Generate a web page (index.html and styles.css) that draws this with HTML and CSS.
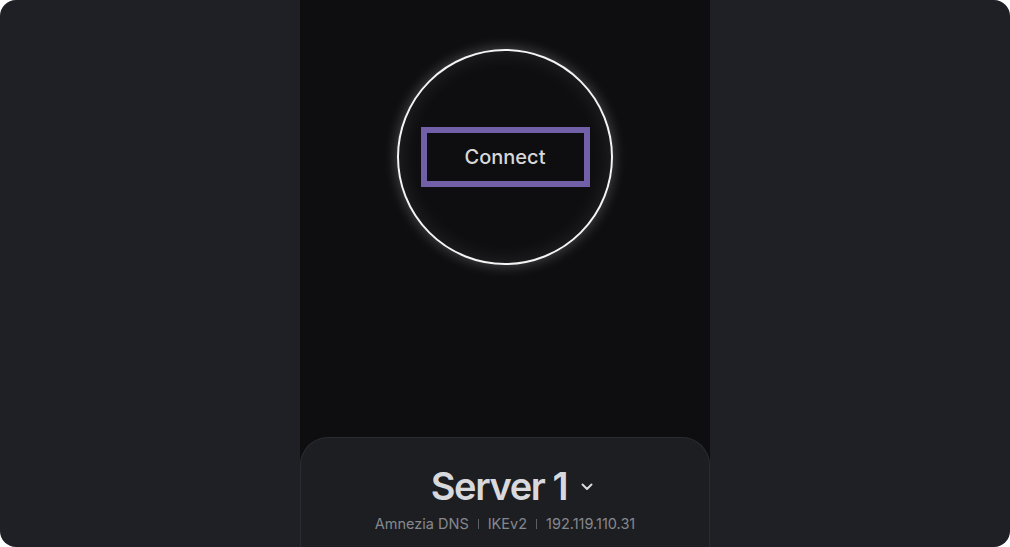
FILE: index.html
```html
<!DOCTYPE html>
<html>
<head>
<meta charset="utf-8">
<link rel="stylesheet" href="styles.css">
</head>
<body>
<div class="app">
  <div class="panel">
    <div class="hero">
      <div class="ring">
        <div class="connect">Connect</div>
      </div>
    </div>
    <div class="card">
      <div class="server">
        <span class="server-name">Server 1</span>
        <svg class="chev" width="12" height="8" viewBox="0 0 12 8"><path d="M1.5 1.5 L6 6 L10.5 1.5" fill="none" stroke="#d8d9dc" stroke-width="2" stroke-linecap="round" stroke-linejoin="round"/></svg>
      </div>
      <div class="meta">
        <span>Amnezia DNS</span><span class="sep"></span><span>IKEv2</span><span class="sep"></span><span>192.119.110.31</span>
      </div>
    </div>
  </div>
</div>
</body>
</html>
```
FILE: styles.css
```css
html, body {
  margin: 0;
  padding: 0;
  background: #ffffff;
}
.app {
  width: 1010px;
  height: 547px;
  border-radius: 16px;
  background: #1f2025;
  overflow: hidden;
  display: flex;
  justify-content: center;
  font-family: Inter, "Noto Sans", sans-serif;
}
.panel {
  width: 410px;
  background: #0e0e10;
  display: flex;
  flex-direction: column;
}
.hero {
  flex: 1;
  display: flex;
  justify-content: center;
  padding-top: 49px;
}
.ring {
  width: 212px;
  height: 212px;
  border: 2px solid #f4f4f4;
  border-radius: 50%;
  box-shadow: 0 0 14px rgba(255, 255, 255, 0.28), inset 0 0 22px rgba(255, 255, 255, 0.10);
  display: flex;
  align-items: center;
  justify-content: center;
}
.connect {
  width: 157px;
  height: 48px;
  border: 6px solid #7160a8;
  display: flex;
  align-items: center;
  justify-content: center;
  color: #d8d8d9;
  font-size: 20px;
  font-weight: 500;
  background: #0e0e10;
}
.card {
  height: 110px;
  border: 1px solid #2b2c31;
  border-bottom: none;
  border-radius: 28px 28px 0 0;
  background: #1d1e22;
  display: flex;
  flex-direction: column;
  align-items: center;
  box-sizing: border-box;
  padding-top: 22px;
}
.server {
  display: flex;
  align-items: center;
  gap: 14px;
  padding-left: 14px;
}
.server-name {
  color: #d8d9dc;
  font-size: 38px;
  font-weight: 600;
  letter-spacing: -1.4px;
  line-height: 52px;
}
.chev {
  margin-top: 2px;
}
.meta {
  margin-top: 2px;
  display: flex;
  align-items: center;
  gap: 9px;
  color: #85888e;
  font-size: 14.5px;
  line-height: 20px;
}
.sep {
  width: 1px;
  height: 10px;
  background: #5c5f64;
}
```
